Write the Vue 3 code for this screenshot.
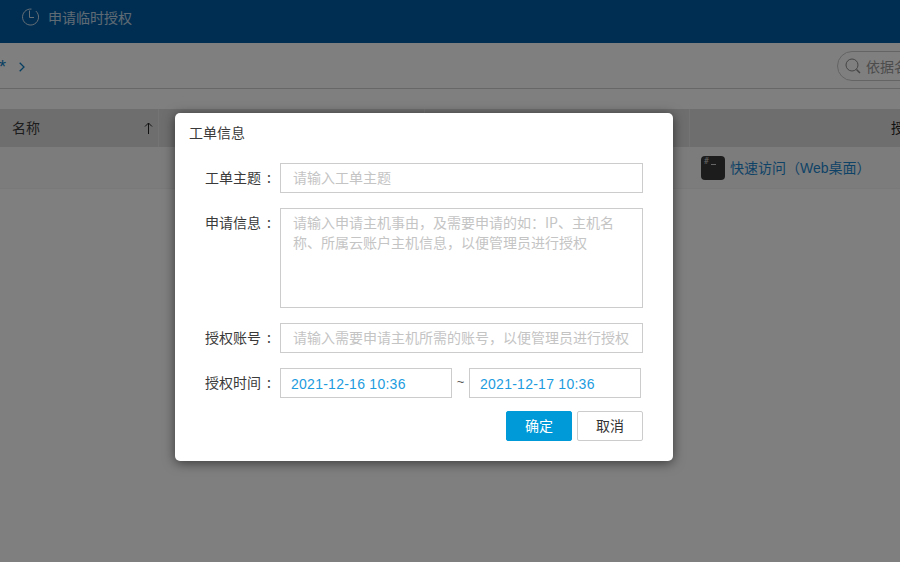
<script setup>
const rows = [
  { label: '工单主题', ph: '请输入工单主题' },
]
</script>

<template>
  <div class="page">
    <header class="topbar">
      <svg class="clock" width="18" height="18" viewBox="0 0 18 18" fill="none" stroke="currentColor" stroke-width="1">
        <path d="M14.9 3.1A8 8 0 1 1 10.5 1.1" />
        <path d="M8.5 2.5V9.5H13" />
      </svg>
      <span class="topbar-title">申请临时授权</span>
    </header>
    <div class="toolbar">
      <div class="crumbs">
        <span class="star">*</span>
        <svg class="chev" width="6" height="10" viewBox="0 0 6 10" fill="none" stroke="currentColor" stroke-width="1.3">
          <path d="M.7.7 5 5 .7 9.3" />
        </svg>
      </div>
      <div class="search">
        <svg class="lens" width="16" height="16" viewBox="0 0 16 16" fill="none" stroke="#8a8a8a" stroke-width="1">
          <circle cx="7" cy="7" r="6" />
          <path d="M11.5 11.5 15 15" stroke-width="1.5" />
        </svg>
        <span>依据名称搜索</span>
      </div>
    </div>
    <div class="table">
      <div class="thead">
        <div class="th th-name">
          <span class="th-text">名称</span>
          <svg width="9" height="12" viewBox="0 0 9 12" fill="none" stroke="#222" stroke-width="1">
            <path d="M4.5 12V1M1 4.5 4.5 1 8 4.5" />
          </svg>
        </div>
        <div class="th th-mid"></div>
        <div class="th th-mid2"></div>
        <div class="th th-act"><span class="th-text">授权访问</span></div>
      </div>
      <div class="tr">
        <div class="access">
          <span class="term"><i>#</i><b></b></span>
          <a class="link">快速访问（Web桌面）</a>
        </div>
      </div>
    </div>
    <div class="mask"></div>
    <section class="dialog">
      <h3 class="dialog-title">工单信息</h3>
      <div class="form">
        <div v-for="r in rows" :key="r.label" class="row">
          <label class="label">{{ r.label }}<em>:</em></label>
          <input class="field" :placeholder="r.ph" />
        </div>
        <div class="row top">
          <label class="label label-top">申请信息<em>:</em></label>
          <textarea class="field area" placeholder="请输入申请主机事由，及需要申请的如：IP、主机名称、所属云账户主机信息，以便管理员进行授权"></textarea>
        </div>
        <div class="row">
          <label class="label">授权账号<em>:</em></label>
          <input class="field" placeholder="请输入需要申请主机所需的账号，以便管理员进行授权" />
        </div>
        <div class="row">
          <label class="label">授权时间<em>:</em></label>
          <input class="field date" value="2021-12-16 10:36" />
          <span class="tilde">~</span>
          <input class="field date" value="2021-12-17 10:36" />
        </div>
        <div class="actions">
          <button class="btn primary">确定</button>
          <button class="btn">取消</button>
        </div>
      </div>
    </section>
  </div>
</template>

<style>
html, body { margin: 0; overflow: hidden; }
</style>

<style scoped>
.page {
  position: relative;
  width: 900px;
  height: 562px;
  overflow: hidden;
  background: #fff;
  font-family: "Noto Sans CJK SC", "Liberation Sans", sans-serif;
  font-size: 14px;
  color: #3a3a3a;
}
.topbar {
  height: 43px;
  box-sizing: border-box;
  background: #005ca5;
  color: #fff;
  display: flex;
  align-items: center;
  padding: 0 0 9px 21px;
  gap: 9px;
}
.clock { display: block; opacity: .8; }
.topbar-title { font-size: 14px; line-height: 20px; opacity: .75; }
.toolbar {
  height: 46px;
  box-sizing: border-box;
  border-bottom: 1px solid #cfcfcf;
  display: flex;
  justify-content: space-between;
}
.crumbs { color: #0f7fc4; display: flex; align-items: flex-start; gap: 14px; }
.star { font: 18px/18px "Liberation Sans", sans-serif; margin: 15px 0 0 -1px; width: 6px; }
.chev { display: block; margin-top: 19px; }
.search {
  width: 90px;
  margin: 8px -27px 0 0;
  height: 30px;
  box-sizing: border-box;
  border: 1px solid #c8c8c8;
  border-radius: 15px;
  display: flex;
  align-items: center;
  gap: 5px;
  padding: 0 0 1px 7px;
  color: #999;
  white-space: nowrap;
  overflow: hidden;
}
.lens { flex: none; }
.table { margin-top: 20px; }
.thead {
  height: 38px;
  background: #dedcdc;
  display: flex;
}
.th {
  box-sizing: border-box;
  border-right: 1px solid #e8e8e8;
  display: flex;
  align-items: center;
}
.th-text { line-height: 20px; padding-bottom: 2px; }
.th-name { width: 159px; padding: 0 5px 0 12px; justify-content: space-between; }
.th-mid { width: 266px; }
.th-mid2 { width: 265px; }
.th-act { flex: 1; border-right: 0; padding-left: 201px; white-space: nowrap; overflow: hidden; color: #222; }
.tr {
  height: 42px;
  box-sizing: border-box;
  background: #f8f8f8;
  border-bottom: 1px solid #f2f2f2;
  display: flex;
  padding-left: 701px;
  align-items: center;
}
.access { display: flex; align-items: center; gap: 5px; }
.term {
  width: 24px;
  height: 24px;
  border-radius: 4px;
  background: #383838;
  position: relative;
  display: block;
}
.term i {
  position: absolute;
  left: 3px;
  top: 1px;
  font: normal 8px/10px "DejaVu Sans Mono", monospace;
  color: #ccc;
}
.term b {
  position: absolute;
  left: 10px;
  top: 8px;
  width: 5px;
  height: 1px;
  background: #ccc;
}
.link { color: #1d87cf; white-space: nowrap; line-height: 20px; font-family: "Liberation Sans", "Noto Sans CJK SC", sans-serif; }
.mask {
  position: absolute;
  inset: 0;
  background: rgba(0, 0, 0, .5);
}
.dialog {
  position: absolute;
  left: 175px;
  top: 113px;
  width: 498px;
  height: 348px;
  box-sizing: border-box;
  background: #fff;
  border-radius: 5px;
  box-shadow: 0 2px 12px rgba(0, 0, 0, .55);
  padding: 0 30px 0 0;
}
.dialog-title {
  margin: 0;
  height: 50px;
  padding: 9px 0 0 14px;
  box-sizing: border-box;
  font-size: 14px;
  line-height: 20px;
  font-weight: 400;
}
.form { display: flex; flex-direction: column; gap: 15px; }
.row { display: flex; align-items: center; }
.row.top { align-items: flex-start; }
.label {
  width: 105px;
  box-sizing: border-box;
  padding: 0 0 2px 30px;
  flex: none;
  line-height: 20px;
  display: flex;
}
.label em { font-style: normal; margin-left: 6px; }
.label-top { padding-top: 4px; }
.field {
  box-sizing: border-box;
  width: 363px;
  height: 30px;
  border: 1px solid #ccc;
  border-radius: 0;
  padding: 0 12px 2px;
  font: 14px/20px "Noto Sans CJK SC", "Liberation Sans", sans-serif;
  color: #333;
  outline: none;
  background: #fff;
  display: block;
}
.field::placeholder { color: #c4c4c4; opacity: 1; }
.area { height: 100px; padding: 3px 12px; resize: none; }
.date {
  width: 172px;
  padding: 1px 10px 0;
  color: #1d9ce0;
  font-family: "Liberation Sans", sans-serif;
  letter-spacing: .26px;
}
.tilde {
  width: 17px;
  text-align: center;
  color: #555;
  font: 13px/16px "Liberation Sans", sans-serif;
  padding-bottom: 3px;
  flex: none;
}
.actions { display: flex; justify-content: flex-end; gap: 5px; margin-top: -2px; }
.btn {
  width: 66px;
  height: 30px;
  box-sizing: border-box;
  border: 1px solid #ccc;
  border-radius: 2px;
  background: #fff;
  font: 14px/20px "Noto Sans CJK SC", "Liberation Sans", sans-serif;
  color: #333;
  padding: 0 0 2px;
}
.primary { background: #009ad9; border-color: #009ad9; color: #fff; }
</style>
